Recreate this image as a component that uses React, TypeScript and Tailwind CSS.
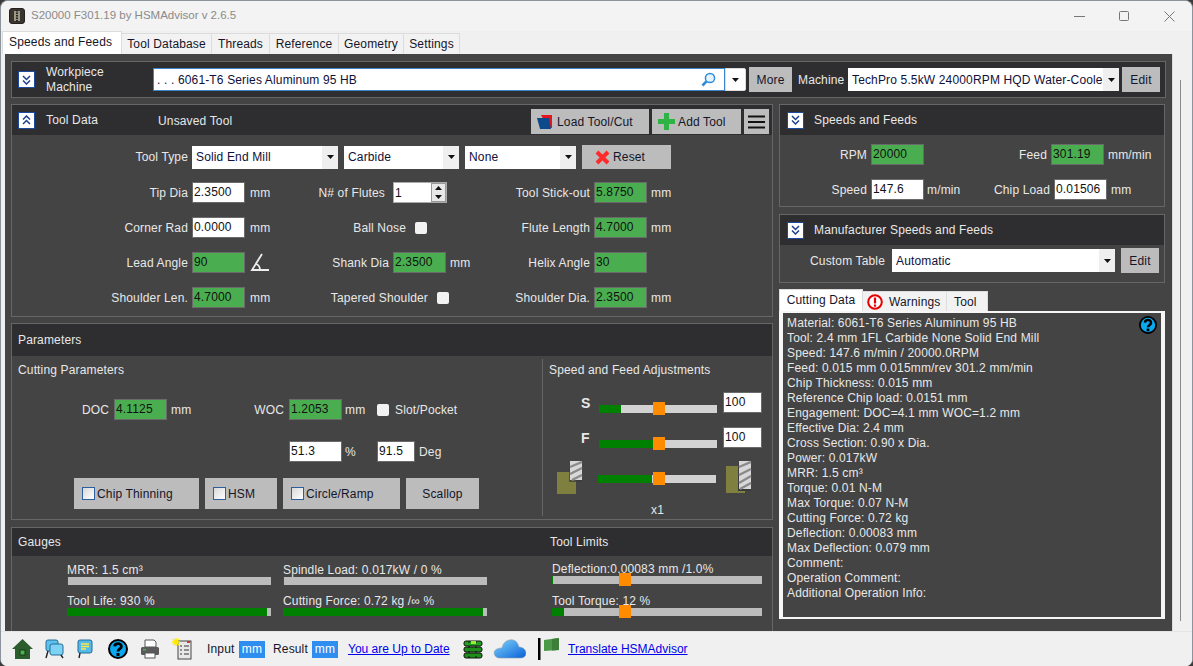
import React from "react";

const Chev = ({ up = false }: { up?: boolean }) => (
  <div className="w-[17px] h-[17px] bg-white border-[1.5px] border-[#1c4aa0] flex items-center justify-center shrink-0">
    <svg width="9" height="10" viewBox="0 0 9 10" fill="none" stroke="#1c3f8f" strokeWidth="1.5">
      {up ? <path d="M1 4.500 4.500 1 8 4.500M1 9 4.500 5.500 8 9" /> : <path d="M1 1 4.500 4.500 8 1M1 5.500 4.500 9 8 5.500" />}
    </svg>
  </div>
);

const Arrow = () => (
  <svg width="7" height="4" viewBox="0 0 7 4"><path d="M0 0h7L3.500 4z" fill="#111" /></svg>
);

const Select = ({ text, cls }: { text: string; cls: string }) => (
  <div className={`bg-white flex items-center text-[#10103a] pl-[4px] shrink-0 ${cls}`}>
    <span className="flex-1 whitespace-nowrap">{text}</span>
    <span className="w-[16px] h-full bg-[#efefef] flex items-center justify-center shrink-0"><Arrow /></span>
  </div>
);

const Btn = ({ children, cls }: { children: React.ReactNode; cls: string }) => (
  <div className={`bg-[#bcbcbc] text-[#15152a] flex items-center shrink-0 ${cls}`}>{children}</div>
);

const Inp = ({ v, green = false, w = "w-[53px]" }: { v: string; green?: boolean; w?: string }) => (
  <div className={`${w} h-[21px] shrink-0 border border-[#6a6a6a] pl-[1px] pb-[2px] flex items-center text-[#111] ${green ? "bg-[#4aae50]" : "bg-white"}`}>{v}</div>
);

const Lbl = ({ t, w }: { t: string; w: string }) => (
  <div className={`${w} text-right shrink-0 whitespace-nowrap`}>{t}</div>
);

const Check = ({ cls = "" }: { cls?: string }) => (
  <div className={`w-[12px] h-[12px] rounded-[2px] bg-[#f2f2f2] shrink-0 ${cls}`} />
);

const BlueCheck = () => (
  <div className="w-[13px] h-[13px] border border-[#2c5f9e] bg-gradient-to-br from-[#d8d8d8] to-white shrink-0 mr-[2px]" />
);

const Header = ({ children, cls = "h-[30px]" }: { children: React.ReactNode; cls?: string }) => (
  <div className={`bg-[#2e2e30] flex items-center shrink-0 ${cls}`}>{children}</div>
);

const Slider = ({ track, fill, thumb }: { track: string; fill: string; thumb: string }) => (
  <div className={`relative h-[8px] bg-[#d2d2d2] shrink-0 ${track}`}>
    <div className={`h-full bg-[#008000] ${fill}`} />
    <div className={`absolute top-[-3px] w-[12px] h-[13px] bg-[#ff8c00] ${thumb}`} />
  </div>
);

const Gauge = ({ t, fill, w = "w-[204px]" }: { t: string; fill: string; w?: string }) => (
  <div className={`${w} shrink-0`}>
    <div className="h-[14px] flex items-center whitespace-nowrap">{t}</div>
    <div className="h-[8px] bg-[#bcbcbc]"><div className={`h-full bg-[#008000] ${fill}`} /></div>
  </div>
);

const ToolPic = ({ long = false }: { long?: boolean }) => (
  <svg width="27" height="33" viewBox="0 0 27 33" className="shrink-0">
    {long ? (
      <>
        <rect x="0" y="5" width="19" height="27" fill="#7f7f3f" />
        <rect x="12" y="2" width="13" height="28" fill="#3a3a3a" />
        <rect x="13" y="0" width="12" height="28" fill="#d8d8d8" />
        <path d="M13 6 25 1M13 14 25 8M13 22 25 15M14 28 25 22" stroke="#8a8a8a" strokeWidth="2.400" />
      </>
    ) : (
      <>
        <rect x="0" y="11" width="19" height="22" fill="#7f7f3f" />
        <rect x="12" y="3" width="13" height="18" fill="#3a3a3a" opacity=".7" />
        <rect x="13" y="0" width="12" height="19" fill="#d8d8d8" />
        <path d="M13 6 25 1M13 13 25 7M15 19 25 14" stroke="#8a8a8a" strokeWidth="2.400" />
      </>
    )}
  </svg>
);

const lines = [
  "Material: 6061-T6 Series Aluminum 95 HB",
  "Tool: 2.4 mm 1FL Carbide None Solid End Mill",
  "Speed: 147.6 m/min / 20000.0RPM",
  "Feed: 0.015 mm 0.015mm/rev 301.2 mm/min",
  "Chip Thickness: 0.015 mm",
  "Reference Chip load: 0.0151 mm",
  "Engagement: DOC=4.1 mm WOC=1.2 mm",
  "Effective Dia: 2.4 mm",
  "Cross Section: 0.90 x Dia.",
  "Power: 0.017kW",
  "MRR: 1.5 cm³",
  "Torque: 0.01 N-M",
  "Max Torque: 0.07 N-M",
  "Cutting Force: 0.72 kg",
  "Deflection: 0.00083 mm",
  "Max Deflection: 0.079 mm",
  "Comment:",
  "Operation Comment:",
  "Additional Operation Info:",
];

const HelpIcon = ({ s = 20 }: { s?: number }) => (
  <svg width={s} height={s} viewBox="0 0 20 20" className="shrink-0">
    <circle cx="10" cy="10" r="9" fill="#0aa8ee" stroke="#000" strokeWidth="2" />
    <path d="M6.600 7.400C6.800 3.600 13.400 3.600 13.400 7.400 13.400 10 10 9.800 10 12.600" fill="none" stroke="#000" strokeWidth="2.800" />
    <rect x="8.500" y="14" width="3" height="3" fill="#000" />
  </svg>
);

export default function App() {
  return (
    <div className="w-[1193px] h-[666px] overflow-hidden bg-[#3a3a3a] font-['Liberation_Sans',Arial,sans-serif] text-[12px] tracking-[0.15px] text-[#e8e8e8]">
      <div className="w-full h-full rounded-t-[8px] rounded-b-[7px] bg-[#f0f0f0] border-t border-x border-[#8b949c] flex flex-col overflow-hidden">
        {/* Title bar */}
        <div className="h-[30px] shrink-0 bg-[#f3f3f3] flex items-center pl-[8px] text-[#8a8a8a]">
          <svg width="16" height="16" viewBox="0 0 16 16" className="shrink-0">
            <rect x="0.500" y="0.500" width="15" height="15" rx="2.500" fill="#3a352c" stroke="#222" />
            <path d="M5 3h6v10H5z" fill="#9c9686" />
            <path d="M8 2v12" stroke="#222" strokeWidth="2" strokeDasharray="1.500 1" />
          </svg>
          <span className="ml-[6px] whitespace-nowrap text-[11.5px] tracking-normal">S20000 F301.19 by HSMAdvisor v 2.6.5</span>
          <div className="flex-1" />
          <svg width="11" height="1" viewBox="0 0 11 1" className="shrink-0"><rect width="11" height="1" fill="#777" /></svg>
          <svg width="10" height="10" viewBox="0 0 10 10" className="ml-[34px] shrink-0"><rect x=".5" y=".5" width="9" height="9" rx="1" fill="none" stroke="#777" /></svg>
          <svg width="11" height="11" viewBox="0 0 11 11" className="ml-[35px] mr-[17px] shrink-0"><path d="M.5.5l10 10M10.500.5l-10 10" stroke="#777" /></svg>
        </div>
        {/* Tabs */}
        <div className="h-[23px] shrink-0 bg-[#f0f0f0] flex items-end pl-[1px] text-[#15152a]">
          <div className="w-[120px] h-[23px] bg-white border-x border-t border-[#dcdcdc] flex items-center pl-[6px] pb-[2px] whitespace-nowrap">Speeds and Feeds</div>
          {[
            ["Tool Database", "w-[90px]"],
            ["Threads", "w-[58px]"],
            ["Reference", "w-[69px]"],
            ["Geometry", "w-[65px]"],
            ["Settings", "w-[56px]"],
          ].map(([t, w]) => (
            <div key={t} className={`${w} h-[21px] border-r border-t border-[#dcdcdc] bg-[#f2f2f2] flex items-center justify-center whitespace-nowrap`}>{t}</div>
          ))}
        </div>
        {/* Main */}
        <div className="flex-1 flex min-h-0">
          <div className="ml-[4px] w-[1167px] bg-[#444444] pl-[6px] pt-[7px] flex flex-col min-h-0 shrink-0">
            {/* Workpiece panel */}
            <div className="w-[1155px] h-[37px] shrink-0 bg-[#2e2e30] border border-[#666] flex items-center pl-[6px]">
              <Chev />
              <div className="ml-[11px] w-[107px] leading-[15px]">Workpiece<br />Machine</div>
              <div className="w-[572px] h-[23px] bg-white border border-[#3b86c8] flex items-center pl-[3px] pr-[8px] text-[#10103a] shrink-0">
                <span className="flex-1 whitespace-nowrap">. . . 6061-T6 Series Aluminum 95 HB</span>
                <svg width="15" height="15" viewBox="0 0 15 15">
                  <circle cx="9" cy="6" r="4.600" fill="#e6f3fc" stroke="#2a8be0" strokeWidth="1.500" />
                  <path d="M5.400 9.400 1.500 13.500" stroke="#2a8be0" strokeWidth="2.600" />
                </svg>
              </div>
              <div className="w-[21px] h-[23px] bg-white rounded-r-[2px] border border-[#ddd] flex items-center justify-center shrink-0"><Arrow /></div>
              <Btn cls="ml-[3px] w-[43px] h-[25px] justify-center">More</Btn>
              <div className="ml-[6px] w-[50px] whitespace-nowrap">Machine</div>
              <Select text="TechPro 5.5kW 24000RPM HQD Water-Coole" cls="w-[271px] h-[23px]" />
              <Btn cls="ml-[3px] w-[38px] h-[25px] justify-center">Edit</Btn>
            </div>
            <div className="flex gap-[6px] mt-[6px] flex-1 min-h-0">
              {/* Left column */}
              <div className="w-[762px] shrink-0 flex flex-col">
                {/* Tool Data */}
                <div className="h-[213px] border border-[#666] shrink-0">
                  <Header>
                    <div className="ml-[6px]"><Chev up /></div>
                    <div className="ml-[11px] w-[112px]">Tool Data</div>
                    <div className="w-[373px] pt-[1px]">Unsaved Tool</div>
                    <Btn cls="w-[118px] h-[25px] mt-[3px] pl-[5px]">
                      <svg width="18" height="16" viewBox="0 0 18 16" className="mr-[3px] shrink-0">
                        <path d="M5 1h11v13H12z" fill="#e8141c" />
                        <path d="M1 4h12l2 11H4z" fill="#0d4a8c" />
                      </svg>
                      Load Tool/Cut
                    </Btn>
                    <Btn cls="ml-[3px] w-[89px] h-[25px] mt-[3px] pl-[6px]">
                      <svg width="17" height="17" viewBox="0 0 17 17" className="mr-[3px] shrink-0">
                        <path d="M6 0h5v6h6v5h-6v6H6v-6H0V6h6z" fill="#2fb344" />
                      </svg>
                      Add Tool
                    </Btn>
                    <Btn cls="ml-[3px] w-[25px] h-[25px] mt-[3px] justify-center">
                      <svg width="17" height="14" viewBox="0 0 17 14"><path d="M0 1.500h17M0 7h17M0 12.500h17" stroke="#111" strokeWidth="2.200" /></svg>
                    </Btn>
                  </Header>
                  <div className="pt-[10px]">
                    <div className="flex items-center h-[24px]">
                      <Lbl t="Tool Type" w="w-[176px]" />
                      <Select text="Solid End Mill" cls="ml-[4px] w-[146px] h-[23px]" />
                      <Select text="Carbide" cls="ml-[6px] w-[115px] h-[23px]" />
                      <Select text="None" cls="ml-[6px] w-[111px] h-[23px]" />
                      <Btn cls="ml-[6px] w-[89px] h-[24px] pl-[13px]">
                        <svg width="15" height="15" viewBox="0 0 15 15" className="mr-[3px] shrink-0">
                          <path d="M2 2l11 11M13 2 2 13" stroke="#ff2a2a" strokeWidth="4" />
                        </svg>
                        Reset
                      </Btn>
                    </div>
                    <div className="flex items-center h-[21px] mt-[13px]">
                      <Lbl t="Tip Dia" w="w-[176px]" />
                      <div className="ml-[4px]"><Inp v="2.3500" /></div>
                      <div className="ml-[5px] w-[20px]">mm</div>
                      <Lbl t="N# of Flutes" w="w-[115px]" />
                      <div className="ml-[8px] w-[54px] h-[21px] bg-white border border-[#aaa] flex items-center pl-[1px] text-[#111] shrink-0">
                        <span className="flex-1">1</span>
                        <div className="w-[15px] h-[19px] border border-[#999] bg-[#e8e8e8] flex flex-col items-center justify-around">
                          <svg width="7" height="4" viewBox="0 0 7 4"><path d="M0 4h7L3.500 0z" fill="#111" /></svg>
                          <Arrow />
                        </div>
                      </div>
                      <Lbl t="Tool Stick-out" w="w-[143px]" />
                      <div className="ml-[4px]"><Inp v="5.8750" green /></div>
                      <div className="ml-[4px]">mm</div>
                    </div>
                    <div className="flex items-center h-[21px] mt-[14px]">
                      <Lbl t="Corner Rad" w="w-[176px]" />
                      <div className="ml-[4px]"><Inp v="0.0000" /></div>
                      <div className="ml-[5px] w-[20px]">mm</div>
                      <Lbl t="Ball Nose" w="w-[136px]" />
                      <Check cls="ml-[9px]" />
                      <Lbl t="Flute Length" w="w-[163px]" />
                      <div className="ml-[4px]"><Inp v="4.7000" green /></div>
                      <div className="ml-[4px]">mm</div>
                    </div>
                    <div className="flex items-center h-[21px] mt-[14px]">
                      <Lbl t="Lead Angle" w="w-[176px]" />
                      <div className="ml-[4px]"><Inp v="90" green /></div>
                      <svg width="20" height="20" viewBox="0 0 20 20" className="ml-[5px] shrink-0">
                        <path d="M12 1 2 17h17M6 11c3 1 4 3 4 6" fill="none" stroke="#eee" strokeWidth="1.800" />
                      </svg>
                      <Lbl t="Shank Dia" w="w-[119px]" />
                      <div className="ml-[4px]"><Inp v="2.3500" green /></div>
                      <div className="ml-[4px] w-[20px]">mm</div>
                      <Lbl t="Helix Angle" w="w-[120px]" />
                      <div className="ml-[4px]"><Inp v="30" green /></div>
                    </div>
                    <div className="flex items-center h-[21px] mt-[14px]">
                      <Lbl t="Shoulder Len." w="w-[176px]" />
                      <div className="ml-[4px]"><Inp v="4.7000" green /></div>
                      <div className="ml-[5px] w-[20px]">mm</div>
                      <Lbl t="Tapered Shoulder" w="w-[158px]" />
                      <Check cls="ml-[9px]" />
                      <Lbl t="Shoulder Dia." w="w-[141px]" />
                      <div className="ml-[4px]"><Inp v="2.3500" green /></div>
                      <div className="ml-[4px]">mm</div>
                    </div>
                  </div>
                </div>
                {/* Parameters */}
                <div className="h-[197px] mt-[6px] border border-[#666] shrink-0">
                  <Header cls="h-[32px] pl-[6px]">Parameters</Header>
                  <div className="flex h-[163px]">
                    <div className="w-[531px] shrink-0 border-r border-[#666] mt-[3px] mb-[3px]">
                      <div className="h-[15px] mt-[3px] pl-[6px] flex items-center">Cutting Parameters</div>
                      <div className="flex items-center h-[21px] mt-[22px]">
                        <Lbl t="DOC" w="w-[97px]" />
                        <div className="ml-[5px]"><Inp v="4.1125" green /></div>
                        <div className="ml-[4px] w-[44px]">mm</div>
                        <Lbl t="WOC" w="w-[69px]" />
                        <div className="ml-[5px]"><Inp v="1.2053" green /></div>
                        <div className="ml-[3px] w-[32px]">mm</div>
                        <Check />
                        <div className="ml-[6px] whitespace-nowrap">Slot/Pocket</div>
                      </div>
                      <div className="flex items-center h-[21px] mt-[21px] pl-[277px]">
                        <Inp v="51.3" />
                        <div className="ml-[3px] w-[32px]">%</div>
                        <Inp v="91.5" w="w-[38px]" />
                        <div className="ml-[4px]">Deg</div>
                      </div>
                      <div className="flex items-center gap-[6px] h-[31px] mt-[16px] pl-[62px]">
                        <Btn cls="w-[125px] h-[31px] pl-[8px]"><BlueCheck />Chip Thinning</Btn>
                        <Btn cls="w-[72px] h-[31px] pl-[8px]"><BlueCheck />HSM</Btn>
                        <Btn cls="w-[117px] h-[31px] pl-[8px]"><BlueCheck />Circle/Ramp</Btn>
                        <Btn cls="w-[73px] h-[31px] justify-center">Scallop</Btn>
                      </div>
                    </div>
                    <div className="flex-1">
                      <div className="h-[15px] mt-[6px] pl-[6px] flex items-center whitespace-nowrap">Speed and Feed Adjustments</div>
                      <div className="flex items-end h-[21px] mt-[15px]">
                        <div className="w-[56px] pl-[38px] mb-[2px] font-bold text-[14px] leading-[16px] shrink-0">S</div>
                        <Slider track="w-[118px]" fill="w-[22px]" thumb="left-[54px]" />
                        <div className="ml-[6px]"><Inp v="100" w="w-[39px]" /></div>
                      </div>
                      <div className="flex items-end h-[21px] mt-[14px]">
                        <div className="w-[56px] pl-[38px] mb-[2px] font-bold text-[14px] leading-[16px] shrink-0">F</div>
                        <Slider track="w-[118px]" fill="w-[54px]" thumb="left-[54px]" />
                        <div className="ml-[6px]"><Inp v="100" w="w-[39px]" /></div>
                      </div>
                      <div className="flex items-center h-[33px] mt-[13px] pl-[14px]">
                        <ToolPic />
                        <div className="ml-[14px] mt-[3px]"><Slider track="w-[118px]" fill="w-[54px]" thumb="left-[55px]" /></div>
                        <div className="ml-[10px]"><ToolPic long /></div>
                      </div>
                      <div className="h-[15px] mt-[8px] pl-[108px] flex items-center">x1</div>
                    </div>
                  </div>
                </div>
                {/* Gauges */}
                <div className="mt-[7px] flex-1 border-x border-t border-[#666] min-h-0">
                  <Header cls="h-[28px] pl-[6px]">
                    <div className="w-[532px]">Gauges</div>
                    <div>Tool Limits</div>
                  </Header>
                  <div className="flex pl-[55px] pt-[7px]">
                    <div className="flex flex-col gap-[9px]">
                      <Gauge t="MRR: 1.5 cm³" fill="w-[1px]" />
                      <Gauge t="Tool Life: 930 %" fill="w-[200px]" />
                    </div>
                    <div className="flex flex-col gap-[9px] ml-[12px]">
                      <Gauge t="Spindle Load: 0.017kW / 0 %" fill="w-[1px]" />
                      <Gauge t="Cutting Force: 0.72 kg /∞ %" fill="w-[200px]" />
                    </div>
                    <div className="flex flex-col gap-[10px] ml-[65px] -mt-[1px]">
                      <div className="relative">
                        <Gauge t="Deflection:0.00083 mm /1.0%" fill="w-[1px]" w="w-[210px]" />
                        <div className="absolute left-[67px] top-[11px] w-[12px] h-[13px] bg-[#ff8c00]" />
                      </div>
                      <div className="relative">
                        <Gauge t="Tool Torque: 12 %" fill="w-[12px]" w="w-[210px]" />
                        <div className="absolute left-[67px] top-[11px] w-[12px] h-[13px] bg-[#ff8c00]" />
                      </div>
                    </div>
                  </div>
                </div>
              </div>
              {/* Right column */}
              <div className="w-[386px] shrink-0 flex flex-col">
                <div className="h-[103px] border border-[#666] shrink-0">
                  <Header>
                    <div className="ml-[7px]"><Chev /></div>
                    <div className="ml-[10px]">Speeds and Feeds</div>
                  </Header>
                  <div className="flex items-center h-[21px] mt-[9px]">
                    <Lbl t="RPM" w="w-[87px]" />
                    <div className="ml-[4px]"><Inp v="20000" green /></div>
                    <Lbl t="Feed" w="w-[123px]" />
                    <div className="ml-[4px]"><Inp v="301.19" green /></div>
                    <div className="ml-[4px]">mm/min</div>
                  </div>
                  <div className="flex items-center h-[21px] mt-[14px]">
                    <Lbl t="Speed" w="w-[87px]" />
                    <div className="ml-[4px]"><Inp v="147.6" /></div>
                    <div className="ml-[3px] w-[40px]">m/min</div>
                    <Lbl t="Chip Load" w="w-[83px]" />
                    <div className="ml-[4px]"><Inp v="0.01506" /></div>
                    <div className="ml-[4px]">mm</div>
                  </div>
                </div>
                <div className="h-[69px] mt-[7px] border border-[#666] shrink-0">
                  <Header>
                    <div className="ml-[7px]"><Chev /></div>
                    <div className="ml-[10px]">Manufacturer Speeds and Feeds</div>
                  </Header>
                  <div className="flex items-center h-[25px] mt-[3px]">
                    <Lbl t="Custom Table" w="w-[105px]" />
                    <Select text="Automatic" cls="ml-[7px] w-[223px] h-[23px]" />
                    <Btn cls="ml-[6px] w-[38px] h-[25px] justify-center">Edit</Btn>
                  </div>
                </div>
                <div className="flex items-end h-[22px] mt-[6px] text-[#15152a] shrink-0">
                  <div className="w-[84px] h-[22px] bg-white border-x border-t border-[#ddd] flex items-center justify-center pb-[2px]">Cutting Data</div>
                  <div className="w-[84px] h-[20px] bg-[#f2f2f2] border-r border-t border-[#ddd] flex items-center pl-[4px]">
                    <svg width="16" height="16" viewBox="0 0 16 16" className="shrink-0">
                      <circle cx="8" cy="8" r="6.800" fill="#fff" stroke="#e80000" strokeWidth="2" />
                      <path d="M8 3.500v6" stroke="#e80000" strokeWidth="2.200" />
                      <rect x="6.900" y="10.500" width="2.200" height="2.200" fill="#e80000" />
                    </svg>
                    <span className="ml-[6px]">Warnings</span>
                  </div>
                  <div className="w-[41px] h-[20px] bg-[#f2f2f2] border-r border-t border-[#ddd] flex items-center pl-[7px]">Tool</div>
                </div>
                <div className="h-[308px] bg-[#f6f6f6] pl-[4px] pr-[4px] pt-[2px] pb-[2px] shrink-0">
                  <div className="relative h-full bg-[#444444] pl-[4px] pt-[3px]">
                    {lines.map((l) => (
                      <div key={l} className="h-[15px] leading-[15px] whitespace-nowrap">{l}</div>
                    ))}
                    <div className="absolute right-[4px] top-[3px]"><HelpIcon s={18} /></div>
                  </div>
                </div>
              </div>
            </div>
          </div>
          {/* Scroll track */}
          <div className="flex-1 flex justify-center pr-[4px] pt-[26px] pb-[10px] bg-[#f0f0f0] border-l border-[#dcdcdc]">
            <div className="w-[1px] bg-[#8a8a8a]" />
          </div>
        </div>
        {/* Status bar */}
        <div className="h-[35px] shrink-0 bg-[#f0f0f0] border-t border-[#e4e4e4] flex items-center pl-[11px] text-[#15152a]">
          <svg width="21" height="20" viewBox="0 0 21 20" className="shrink-0">
            <path d="M10.500 0 21 10h-3v10H3V10H0z" fill="#2d5c2f" />
            <rect x="8" y="11" width="5" height="5" fill="#4caf50" stroke="#173d19" />
          </svg>
          <svg width="20" height="20" viewBox="0 0 20 20" className="ml-[12px] shrink-0">
            <rect x="1" y="1" width="12" height="11" rx="2" fill="#5cc1ec" stroke="#256d96" />
            <rect x="5" y="5" width="13" height="11" rx="2" fill="#7ed2f4" stroke="#256d96" />
            <path d="M3 12 1 19M16 16l2 3" stroke="#222" strokeWidth="1.400" />
          </svg>
          <svg width="16" height="20" viewBox="0 0 16 20" className="ml-[12px] shrink-0">
            <rect x="1" y="1" width="14" height="13" rx="2" fill="#52b9e8" stroke="#256d96" />
            <path d="M4 5h8M4 7.500h8M4 10h5" stroke="#ffe94a" strokeWidth="1.300" />
            <path d="M3 14 2 19" stroke="#222" strokeWidth="1.400" />
          </svg>
          <div className="ml-[15px]"><HelpIcon /></div>
          <svg width="20" height="20" viewBox="0 0 20 20" className="ml-[12px] shrink-0">
            <path d="M5 1h9l2 2v5H5z" fill="#fff" stroke="#555" />
            <rect x="1" y="8" width="18" height="8" rx="1.500" fill="#5a5a5a" />
            <rect x="3" y="10" width="3" height="1.500" fill="#4caf50" />
            <rect x="5" y="14" width="10" height="5" fill="#fff" stroke="#555" />
          </svg>
          <svg width="20" height="22" viewBox="0 0 20 22" className="ml-[12px] shrink-0">
            <rect x="6" y="3" width="13" height="18" fill="#e8e8e8" stroke="#444" />
            <path d="M8 8h2M12 8h5M8 12h2M12 12h5M8 16h2M12 16h5" stroke="#333" />
            <path d="M4 0v8M0 4h8M1 1l6 6M7 1 1 7" stroke="#ffe900" strokeWidth="1.400" />
            <rect x="15" y="3" width="3" height="2" fill="#c33" />
          </svg>
          <div className="ml-[15px] w-[32px] whitespace-nowrap shrink-0">Input</div>
          <div className="w-[26px] h-[17px] bg-[#2e8ef0] text-white flex items-center justify-center shrink-0">mm</div>
          <div className="ml-[8px] w-[39px] whitespace-nowrap shrink-0">Result</div>
          <div className="w-[26px] h-[17px] bg-[#2e8ef0] text-white flex items-center justify-center shrink-0">mm</div>
          <div className="ml-[10px] w-[103px] text-[#0000ee] underline whitespace-nowrap shrink-0 tracking-normal">You are Up to Date</div>
          <svg width="20" height="20" viewBox="0 0 20 20" className="ml-[12px] shrink-0">
            <rect x="1" y="2" width="18" height="5" rx="2" fill="#22a11e" stroke="#111" />
            <rect x="1" y="8" width="18" height="5" rx="2" fill="#1e8e1a" stroke="#111" />
            <rect x="1" y="14" width="18" height="5" rx="2" fill="#1e8e1a" stroke="#111" />
            <path d="M6 2v17M13 2v17" stroke="#111" strokeDasharray="2 3" />
            <path d="M8 2h5v3H8z" fill="#9eea3a" />
          </svg>
          <svg width="33" height="20" viewBox="0 0 33 20" className="ml-[10px] shrink-0">
            <defs>
              <linearGradient id="cl" x1="0" y1="0" x2="1" y2="1">
                <stop offset="0" stopColor="#7fd6fa" />
                <stop offset="1" stopColor="#0a5fd8" />
              </linearGradient>
            </defs>
            <path d="M7 19C1 19-1 12 4 10 6 9 8 9 9 9 10 3 15 0 20 1 24 2 25 5 26 8 30 8 33 11 33 14 33 18 30 19 27 19z" fill="url(#cl)" stroke="#8aa0b0" strokeWidth=".6" />
          </svg>
          <svg width="21" height="22" viewBox="0 0 21 22" className="ml-[12px] shrink-0">
            <rect x="0" y="0" width="2.500" height="22" fill="#000" />
            <path d="M6 2 21 0v12L6 13z" fill="#4b9a47" />
            <path d="M14 1 21 0v12l-7 .5z" fill="#3d7f3a" />
          </svg>
          <div className="ml-[9px] text-[#0000ee] underline whitespace-nowrap tracking-normal">Translate HSMAdvisor</div>
        </div>
      </div>
    </div>
  );
}
